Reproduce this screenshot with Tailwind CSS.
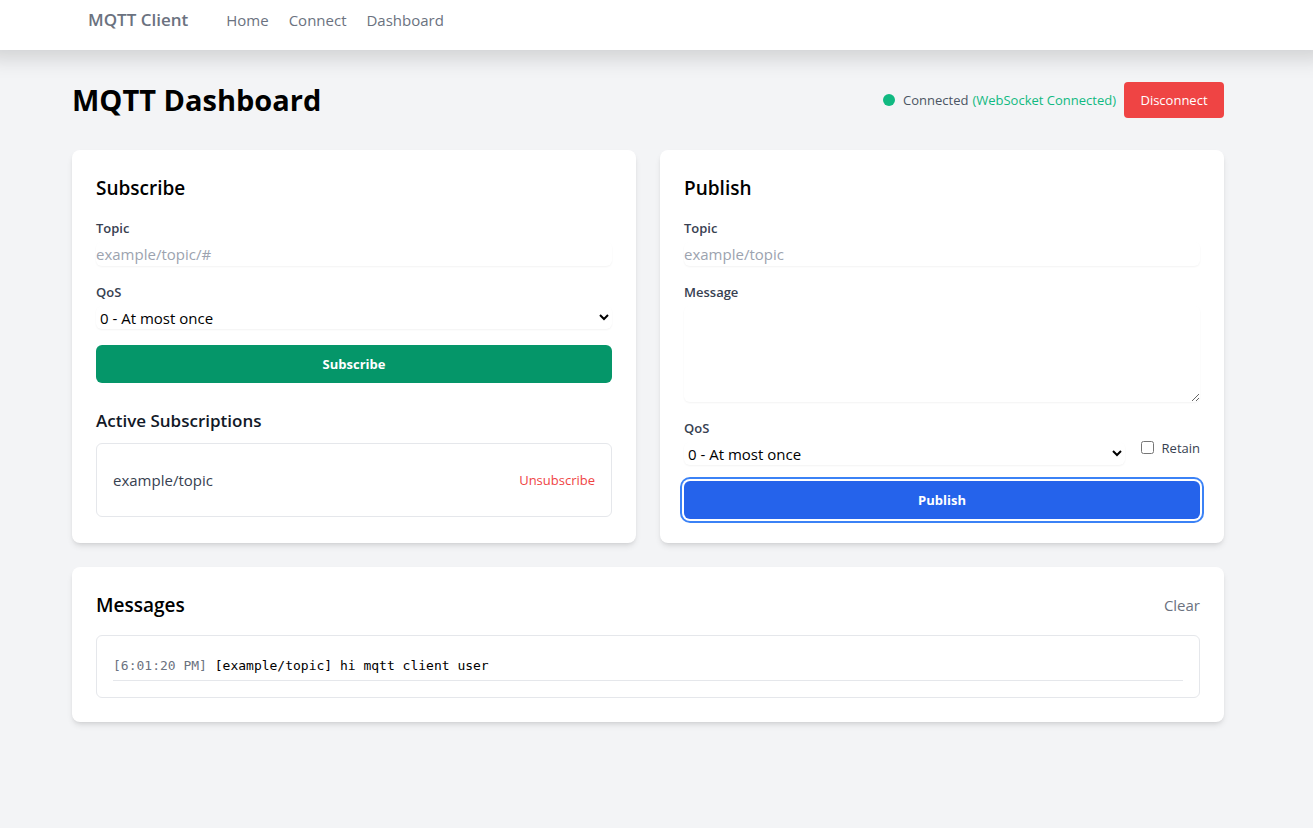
<!DOCTYPE html>
<html lang="en">
<head>
<meta charset="utf-8">
<meta name="viewport" content="width=device-width, initial-scale=1">
<title>MQTT Dashboard</title>
<script src="https://cdn.jsdelivr.net/npm/@tailwindcss/browser@4"></script>
</head>
<body class="min-h-screen bg-[#f3f4f6] pb-8 font-['Segoe_UI','Open_Sans','Noto_Sans',sans-serif] text-[15px] leading-6 text-black">
<header class="bg-white pr-[17px] shadow-[0_-8px_20px_16px_rgb(0_0_0/0.15)]">
  <nav class="mx-auto flex h-[50px] max-w-[1152px] items-start px-4 pt-2 text-[#6b7280]">
    <a href="#" class="mr-[38px] text-[17px] font-semibold">MQTT Client</a>
    <div class="flex gap-5">
      <a href="#">Home</a>
      <a href="#">Connect</a>
      <a href="#">Dashboard</a>
    </div>
  </nav>
</header>

<main class="pr-[17px]">
  <div class="mx-auto max-w-[1152px] pt-8">
    <div class="mb-8 flex items-center justify-between">
      <h1 class="text-[29px] leading-9 font-bold">MQTT Dashboard</h1>
      <div class="flex items-center gap-2 text-[13px] leading-5">
        <span class="size-3 rounded-full bg-[#10b981]"></span>
        <p class="flex gap-1 text-[#4b5563]"><span>Connected</span> <span class="text-[#10b981]">(WebSocket Connected)</span></p>
        <button type="button" class="min-w-[100px] rounded bg-[#ef4444] px-4 py-2 text-white">Disconnect</button>
      </div>
    </div>

    <div class="grid grid-cols-2 gap-6">
      <section class="rounded-lg bg-white p-6 shadow-md">
        <h2 class="mb-4 text-[19px] leading-7 font-semibold">Subscribe</h2>
        <form class="flex flex-col gap-4">
          <div class="flex flex-col gap-1">
            <label for="sub-topic" class="text-[13px] leading-5 font-semibold text-[#374151]">Topic</label>
            <input id="sub-topic" type="text" placeholder="example/topic/#" class="h-6 w-full rounded-md shadow-xs placeholder:text-[#9ca3af]">
          </div>
          <div class="flex flex-col gap-1">
            <label for="sub-qos" class="text-[13px] leading-5 font-semibold text-[#374151]">QoS</label>
            <select id="sub-qos" class="h-[23px] w-full rounded-md bg-white leading-6 shadow-xs">
              <option>0 - At most once</option>
              <option>1 - At least once</option>
              <option>2 - Exactly once</option>
            </select>
          </div>
          <button type="button" class="h-[38px] w-full rounded-md bg-[#059669] text-[13px] leading-5 font-bold text-white">Subscribe</button>
        </form>
        <h3 class="mt-6 mb-2 text-[17px] leading-7 font-semibold text-[#111827]">Active Subscriptions</h3>
        <ul class="rounded-md border border-[#e5e7eb] p-4">
          <li class="flex items-center justify-between py-2">
            <span class="text-[#374151]">example/topic</span>
            <button type="button" class="text-[13px] leading-5 text-[#ef4444]">Unsubscribe</button>
          </li>
        </ul>
      </section>

      <section class="rounded-lg bg-white p-6 shadow-md">
        <h2 class="mb-4 text-[19px] leading-7 font-semibold">Publish</h2>
        <form class="flex flex-col gap-4">
          <div class="flex flex-col gap-1">
            <label for="pub-topic" class="text-[13px] leading-5 font-semibold text-[#374151]">Topic</label>
            <input id="pub-topic" type="text" placeholder="example/topic" class="h-6 w-full rounded-md shadow-xs placeholder:text-[#9ca3af]">
          </div>
          <div class="flex flex-col gap-1">
            <label for="pub-message" class="text-[13px] leading-5 font-semibold text-[#374151]">Message</label>
            <textarea id="pub-message" rows="4" class="w-full rounded-md shadow-xs"></textarea>
          </div>
          <div class="flex items-center gap-4">
            <div class="flex flex-1 flex-col gap-1">
              <label for="pub-qos" class="text-[13px] leading-5 font-semibold text-[#374151]">QoS</label>
              <select id="pub-qos" class="h-[23px] w-full rounded-md bg-white leading-6 shadow-xs">
                <option>0 - At most once</option>
                <option>1 - At least once</option>
                <option>2 - Exactly once</option>
              </select>
            </div>
            <div class="flex items-center gap-2 pt-3">
              <input id="retain" type="checkbox" class="size-[13px]">
              <label for="retain" class="text-[13px] leading-5 text-[#374151]">Retain</label>
            </div>
          </div>
          <button type="button" class="h-[38px] w-full rounded-md bg-[#2563eb] text-[13px] leading-5 font-bold text-white ring-2 ring-[#3b82f6] ring-offset-2">Publish</button>
        </form>
      </section>
    </div>

    <section class="mt-6 rounded-lg bg-white p-6 shadow-md">
      <div class="mb-4 flex items-center justify-between">
        <h2 class="text-[19px] leading-7 font-semibold">Messages</h2>
        <button type="button" class="text-[#6b7280]">Clear</button>
      </div>
      <ul class="rounded-md border border-[#e5e7eb] p-4 font-[Consolas,'DejaVu_Sans_Mono',monospace] text-[13px] leading-5">
        <li class="border-b border-[#e5e7eb] py-1"><span class="text-[#6b7280]">[6:01:20 PM]</span> [example/topic] hi mqtt client user</li>
      </ul>
    </section>
  </div>
</main>
</body>
</html>
